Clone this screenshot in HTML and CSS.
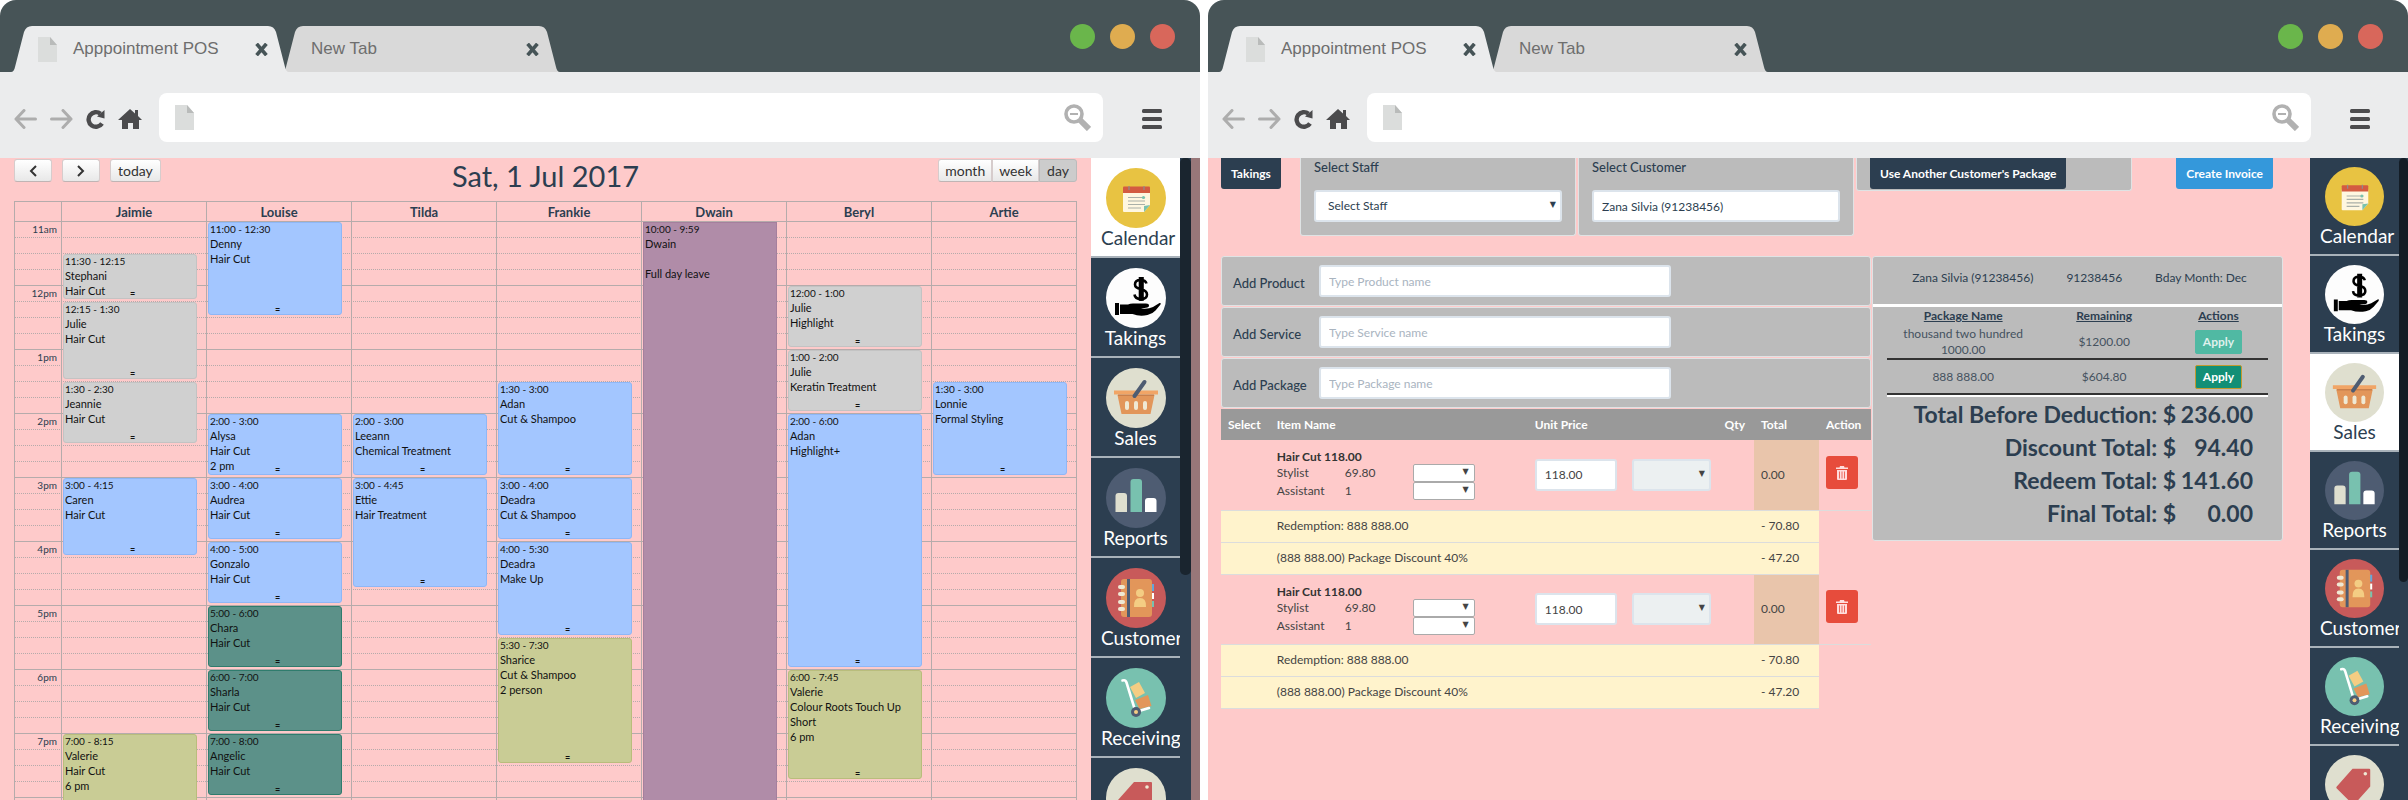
FILE: index.html
```html
<!DOCTYPE html>
<html lang="en">
<head>
<meta charset="utf-8">
<title>Apppointment POS</title>
<link rel="stylesheet" href="styles.css">
</head>
<body>
<svg class="defs" aria-hidden="true">
  <symbol id="tab" viewBox="0 0 278 46"><path d="M0 46Q3 46 4 41L13 6Q15 0 21 0H257Q263 0 265 6L274 41Q275 46 278 46Z"/></symbol>
  <symbol id="page" viewBox="0 0 19 25"><path fill="#dbdddc" d="M0 0h12l7 8v17H0z"/><path fill="#b9bbba" d="M12 0l7 8h-7z"/></symbol>
  <symbol id="close" viewBox="0 0 13 13"><path fill="none" stroke="#465457" stroke-width="3.6" d="M1.6.8l9.800 11.400M11.400.8l-9.800 11.400"/></symbol>
  <symbol id="back" viewBox="0 0 23 20"><path fill="none" stroke="#adadad" stroke-width="3" stroke-linecap="round" stroke-linejoin="round" d="M10 1.500L2 10l8 8.500M2 10h19.500"/></symbol>
  <symbol id="forward" viewBox="0 0 23 20"><path fill="none" stroke="#adadad" stroke-width="3" stroke-linecap="round" stroke-linejoin="round" d="M13 1.500l8 8.500-8 8.500M21 10H1.500"/></symbol>
  <symbol id="reload" viewBox="0 0 19 20"><path fill="none" stroke="#4b4b4d" stroke-width="4.400" d="M16 14.500A7.300 7.300 0 1 1 14.500 4.800"/><path fill="#4b4b4d" d="M18.500 1v8.500L11 7.500z"/></symbol>
  <symbol id="home" viewBox="0 0 24 20"><path fill="#4b4b4d" d="M12 0l5 4.500V1h3v6l4 4h-3v9h-6v-6h-5v6H4v-9H0z"/></symbol>
  <symbol id="search" viewBox="0 0 27 27"><circle cx="10" cy="10" r="8" fill="none" stroke="#b1b1b1" stroke-width="3.600"/><path stroke="#b1b1b1" stroke-width="2" d="M6 10h8"/><path stroke="#b1b1b1" stroke-width="6" d="M16 16l9 9"/></symbol>
  <symbol id="menu" viewBox="0 0 20 20"><g fill="#4b4b4d"><rect width="20" height="4" rx="1.500"/><rect y="8" width="20" height="4" rx="1.500"/><rect y="16" width="20" height="4" rx="1.500"/></g></symbol>
  <symbol id="left" viewBox="0 0 8 12"><path fill="none" stroke="#333" stroke-width="2" d="M7 1L2 6l5 5"/></symbol>
  <symbol id="right" viewBox="0 0 8 12"><path fill="none" stroke="#333" stroke-width="2" d="M1 1l5 5-5 5"/></symbol>
  <symbol id="trash" viewBox="0 0 12 14"><path fill="#fdd" d="M4 0h4l.5 1.500H12V3H0V1.500h3.500zM1 4h10v9q0 1-1 1H2q-1 0-1-1z"/><path stroke="#e74c3c" d="M3.500 5.500v7M6 5.500v7M8.500 5.500v7" stroke-width=".8"/></symbol>
  <symbol id="calendar" viewBox="0 0 60 60"><circle cx="30" cy="30" r="30" fill="#e8c342"/><path fill="#fff7e0" d="M17 23h27v14l-6 7H18q-1 0-1-1z"/><path fill="#d35b41" d="M18 18.500h25q1 0 1 1V25H17v-5.500q0-1 1-1z"/><path stroke="#8d8d8d" stroke-width="1.200" d="M23 18v4M38 18v4"/><path stroke="#aab0a8" stroke-width="1.200" d="M22 29.500h17M22 33h17M22 36.500h17M22 40h13"/><circle cx="37.500" cy="29.500" r="1.600" fill="#7ac2ae"/><path fill="#7ac2ae" d="M38 44v-6l6-1z"/></symbol>
  <symbol id="takings" viewBox="0 0 60 60"><circle cx="30" cy="30" r="30" fill="#fdfdfd"/><path fill="none" stroke="#000" stroke-width="2.600" d="M40.500 15.500q-1-3.500-6-3.500-5.500 0-5.500 4.500 0 3.500 6 4.700 6 1.300 6 5.300 0 4.500-6 4.500-6 0-6.500-4.500M34 9v24M36.500 9v24"/><path d="M9 35h4v12H9zM14 36.500h8q2-1 5-1h13q3 0 3 2t-3 2.300l-5 .7q7 1 12-1.500l6.500-4q2-.5 1 1.500l-5 6q-3 3.500-8 4.500-8 1.700-15-1H14z"/></symbol>
  <symbol id="sales" viewBox="0 0 60 60"><circle cx="30" cy="30" r="30" fill="#dfdfcf"/><path fill="#e2965a" d="M11.500 27h37l-4 19h-29z"/><path fill="#f1a566" d="M8 22.500h44v4H8z"/><path fill="#c9804c" d="M12 26.500h36v1.500H12z"/><g fill="#efe9d4"><rect x="19" y="33" width="4" height="9" rx="2"/><rect x="28" y="33" width="4" height="9" rx="2"/><rect x="37" y="33" width="4" height="9" rx="2"/></g><path stroke="#4e5c72" stroke-width="4" stroke-linecap="round" d="M28.500 28L38.500 14"/></symbol>
  <symbol id="reports" viewBox="0 0 60 60"><circle cx="30" cy="30" r="30" fill="#4e5c72"/><path fill="#dfdfcf" d="M9.500 44V28q0-3 3-3H18q3 0 3 3v16z"/><path fill="#78c1af" d="M24.500 44V14q0-3 3-3H33q3 0 3 3v30z"/><path fill="#fff" d="M39 44V33q0-3 3-3h5.500q3 0 3 3v11z"/></symbol>
  <symbol id="customer" viewBox="0 0 60 60"><circle cx="30" cy="30" r="30" fill="#c85a5a"/><path fill="#62a7dc" d="M44 16h4v7h-4z"/><path fill="#fff" d="M44 25h4v6h-4z"/><path fill="#78c1af" d="M44 33h4v6h-4z"/><rect x="15" y="11" width="31" height="38" rx="3" fill="#e2965a"/><path fill="#4e5c72" d="M21 11h3v38h-3z"/><g fill="#efe9d4"><rect x="12" y="17" width="7" height="4" rx="2"/><rect x="12" y="24" width="7" height="4" rx="2"/><rect x="12" y="32" width="7" height="4" rx="2"/><rect x="12" y="39" width="7" height="4" rx="2"/></g><circle cx="34" cy="25" r="4" fill="#f4cd83"/><path fill="#f4cd83" d="M28 39q-.5-9 6-9t6 9z"/></symbol>
  <symbol id="receiving" viewBox="0 0 60 60"><circle cx="30" cy="30" r="30" fill="#78c1af"/><path fill="#f4cd83" d="M24 19l9-5 6 11-9 5z"/><path fill="#e2965a" d="M29 32l13-5 3.500 11-12 3z"/><path fill="none" stroke="#fff" stroke-width="2.600" stroke-linecap="round" stroke-linejoin="round" d="M16.500 12.500q3-1 4 2L29 42M33 43l10-3"/><circle cx="30" cy="44" r="5" fill="#4e5c72"/><circle cx="30" cy="44" r="2" fill="#f4cd83"/></symbol>
  <symbol id="tag" viewBox="0 0 60 60"><circle cx="30" cy="30" r="30" fill="#dfdfcf"/><path fill="#c85a5a" d="M28 14h17q1 0 1 1v17L30 50q-1 1-2 0L12 34q-1-1 0-2z"/><circle cx="41" cy="19" r="1.800" fill="#efe9d4"/></symbol>
</svg>

<section class="browser">
  <header class="tabs">
    <div class="tab tab-active"><svg class="tab-shape"><use href="#tab"/></svg><svg class="page-icon"><use href="#page"/></svg><span class="tab-title">Apppointment POS</span><button class="icon-btn" aria-label="Close tab"><svg width="13" height="13"><use href="#close"/></svg></button></div>
    <div class="tab tab-new"><svg class="tab-shape"><use href="#tab"/></svg><span class="tab-title">New Tab</span><button class="icon-btn" aria-label="Close tab"><svg width="13" height="13"><use href="#close"/></svg></button></div>
    <div class="lights"><i class="light green"></i><i class="light amber"></i><i class="light red"></i></div>
  </header>
  <nav class="toolbar">
    <div class="nav-buttons">
      <button class="icon-btn" aria-label="Back"><svg width="23" height="20"><use href="#back"/></svg></button>
      <button class="icon-btn" aria-label="Forward"><svg width="23" height="20"><use href="#forward"/></svg></button>
      <button class="icon-btn" aria-label="Reload"><svg width="19" height="20"><use href="#reload"/></svg></button>
      <button class="icon-btn" aria-label="Home"><svg width="24" height="20"><use href="#home"/></svg></button>
    </div>
    <div class="address"><svg class="page-icon"><use href="#page"/></svg><input type="text" aria-label="Address"><button class="icon-btn" aria-label="Search"><svg width="27" height="27"><use href="#search"/></svg></button></div>
    <button class="icon-btn" aria-label="Menu"><svg width="20" height="20"><use href="#menu"/></svg></button>
  </nav>
  <div class="view">
    <main class="schedule">
      <div class="cal-head">
        <div class="cal-nav"><button class="cal-btn" aria-label="Previous"><svg width="8" height="12"><use href="#left"/></svg></button><button class="cal-btn" aria-label="Next"><svg width="8" height="12"><use href="#right"/></svg></button><button class="cal-btn today">today</button></div>
        <h1>Sat, 1 Jul 2017</h1>
        <div class="cal-views"><button class="cal-btn">month</button><button class="cal-btn">week</button><button class="cal-btn selected">day</button></div>
      </div>
      <div class="staff-row"><span></span><b>Jaimie</b><b>Louise</b><b>Tilda</b><b>Frankie</b><b>Dwain</b><b>Beryl</b><b>Artie</b></div>
      <div class="cal-body">
        <div class="hours"><span>11am</span><span>12pm</span><span>1pm</span><span>2pm</span><span>3pm</span><span>4pm</span><span>5pm</span><span>6pm</span><span>7pm</span></div>
        <div class="day">
          <article class="event grey" style="grid-row:3/span 3"><time>11:30 - 12:15</time><p>Stephani</p><p>Hair Cut</p></article>
          <article class="event grey" style="grid-row:6/span 5"><time>12:15 - 1:30</time><p>Julie</p><p>Hair Cut</p></article>
          <article class="event grey" style="grid-row:11/span 4"><time>1:30 - 2:30</time><p>Jeannie</p><p>Hair Cut</p></article>
          <article class="event blue" style="grid-row:17/span 5"><time>3:00 - 4:15</time><p>Caren</p><p>Hair Cut</p></article>
          <article class="event olive" style="grid-row:33/span 5"><time>7:00 - 8:15</time><p>Valerie</p><p>Hair Cut</p><p>6 pm</p></article>
        </div>
        <div class="day">
          <article class="event blue" style="grid-row:1/span 6"><time>11:00 - 12:30</time><p>Denny</p><p>Hair Cut</p></article>
          <article class="event blue" style="grid-row:13/span 4"><time>2:00 - 3:00</time><p>Alysa</p><p>Hair Cut</p><p>2 pm</p></article>
          <article class="event blue" style="grid-row:17/span 4"><time>3:00 - 4:00</time><p>Audrea</p><p>Hair Cut</p></article>
          <article class="event blue" style="grid-row:21/span 4"><time>4:00 - 5:00</time><p>Gonzalo</p><p>Hair Cut</p></article>
          <article class="event teal" style="grid-row:25/span 4"><time>5:00 - 6:00</time><p>Chara</p><p>Hair Cut</p></article>
          <article class="event teal" style="grid-row:29/span 4"><time>6:00 - 7:00</time><p>Sharla</p><p>Hair Cut</p></article>
          <article class="event teal" style="grid-row:33/span 4"><time>7:00 - 8:00</time><p>Angelic</p><p>Hair Cut</p></article>
        </div>
        <div class="day">
          <article class="event blue" style="grid-row:13/span 4"><time>2:00 - 3:00</time><p>Leeann</p><p>Chemical Treatment</p></article>
          <article class="event blue" style="grid-row:17/span 7"><time>3:00 - 4:45</time><p>Ettie</p><p>Hair Treatment</p></article>
        </div>
        <div class="day">
          <article class="event blue" style="grid-row:11/span 6"><time>1:30 - 3:00</time><p>Adan</p><p>Cut &amp; Shampoo</p></article>
          <article class="event blue" style="grid-row:17/span 4"><time>3:00 - 4:00</time><p>Deadra</p><p>Cut &amp; Shampoo</p></article>
          <article class="event blue" style="grid-row:21/span 6"><time>4:00 - 5:30</time><p>Deadra</p><p>Make Up</p></article>
          <article class="event olive" style="grid-row:27/span 8"><time>5:30 - 7:30</time><p>Sharice</p><p>Cut &amp; Shampoo</p><p>2 person</p></article>
        </div>
        <div class="day">
          <article class="event leave" style="grid-row:1/span 44"><time>10:00 - 9:59</time><p>Dwain</p><p>&nbsp;</p><p>Full day leave</p></article>
        </div>
        <div class="day">
          <article class="event grey" style="grid-row:5/span 4"><time>12:00 - 1:00</time><p>Julie</p><p>Highlight</p></article>
          <article class="event grey" style="grid-row:9/span 4"><time>1:00 - 2:00</time><p>Julie</p><p>Keratin Treatment</p></article>
          <article class="event blue" style="grid-row:13/span 16"><time>2:00 - 6:00</time><p>Adan</p><p>Highlight+</p></article>
          <article class="event olive" style="grid-row:29/span 7"><time>6:00 - 7:45</time><p>Valerie</p><p>Colour Roots Touch Up Short</p><p>6 pm</p></article>
        </div>
        <div class="day">
          <article class="event blue" style="grid-row:11/span 6"><time>1:30 - 3:00</time><p>Lonnie</p><p>Formal Styling</p></article>
        </div>
      </div>
    </main>
    <aside class="side">
      <a class="side-item current" href="#calendar"><svg><use href="#calendar"/></svg>Calendar</a>
      <a class="side-item" href="#takings"><svg><use href="#takings"/></svg>Takings</a>
      <a class="side-item" href="#sales"><svg><use href="#sales"/></svg>Sales</a>
      <a class="side-item" href="#reports"><svg><use href="#reports"/></svg>Reports</a>
      <a class="side-item" href="#customer"><svg><use href="#customer"/></svg>Customers</a>
      <a class="side-item" href="#receiving"><svg><use href="#receiving"/></svg>Receivings</a>
      <a class="side-item" href="#tag" aria-label="Tags"><svg><use href="#tag"/></svg></a>
    </aside>
    <div class="scroll"><div class="thumb"></div></div>
    <div class="edge"></div>
  </div>
</section>

<section class="browser">
  <header class="tabs">
    <div class="tab tab-active"><svg class="tab-shape"><use href="#tab"/></svg><svg class="page-icon"><use href="#page"/></svg><span class="tab-title">Apppointment POS</span><button class="icon-btn" aria-label="Close tab"><svg width="13" height="13"><use href="#close"/></svg></button></div>
    <div class="tab tab-new"><svg class="tab-shape"><use href="#tab"/></svg><span class="tab-title">New Tab</span><button class="icon-btn" aria-label="Close tab"><svg width="13" height="13"><use href="#close"/></svg></button></div>
    <div class="lights"><i class="light green"></i><i class="light amber"></i><i class="light red"></i></div>
  </header>
  <nav class="toolbar">
    <div class="nav-buttons">
      <button class="icon-btn" aria-label="Back"><svg width="23" height="20"><use href="#back"/></svg></button>
      <button class="icon-btn" aria-label="Forward"><svg width="23" height="20"><use href="#forward"/></svg></button>
      <button class="icon-btn" aria-label="Reload"><svg width="19" height="20"><use href="#reload"/></svg></button>
      <button class="icon-btn" aria-label="Home"><svg width="24" height="20"><use href="#home"/></svg></button>
    </div>
    <div class="address"><svg class="page-icon"><use href="#page"/></svg><input type="text" aria-label="Address"><button class="icon-btn" aria-label="Search"><svg width="27" height="27"><use href="#search"/></svg></button></div>
    <button class="icon-btn" aria-label="Menu"><svg width="20" height="20"><use href="#menu"/></svg></button>
  </nav>
  <div class="view">
    <main class="sale">
      <div class="sale-top">
        <div><button class="btn navy">Takings</button></div>
        <div class="panel pick"><label for="staff">Select Staff</label><span class="drop"><select id="staff" class="field"><option>Select Staff</option></select></span></div>
        <div class="panel pick"><label for="cust">Select Customer</label><input id="cust" class="field" type="text" value="Zana Silvia (91238456)"></div>
        <div class="panel other"><button class="btn navy">Use Another Customer's Package</button></div>
        <div class="invoice"><button class="btn sky">Create Invoice</button></div>
      </div>
      <div class="sale-main">
        <div>
          <div class="panel add"><label for="prod">Add Product</label><input id="prod" class="field" type="text" placeholder="Type Product name"></div>
          <div class="panel add"><label for="serv">Add Service</label><input id="serv" class="field" type="text" placeholder="Type Service name"></div>
          <div class="panel add"><label for="pack">Add Package</label><input id="pack" class="field" type="text" placeholder="Type Package name"></div>
          <table class="items">
            <colgroup><col class="c-select"><col class="c-item"><col class="c-price"><col class="c-qty"><col class="c-total"><col class="c-action"></colgroup>
            <thead><tr><th>Select</th><th>Item Name</th><th>Unit Price</th><th>Qty</th><th>Total</th><th>Action</th></tr></thead>
            <tbody>
              <tr class="item"><td></td><td><strong>Hair Cut 118.00</strong><div class="roles"><span>Stylist</span><span>69.80</span><span class="drop"><select aria-label="Stylist"><option></option></select></span><span>Assistant</span><span>1</span><span class="drop"><select aria-label="Assistant"><option></option></select></span></div></td><td><div class="price"><input class="field" type="text" aria-label="Unit price" value="118.00"><span class="drop"><select class="field muted" aria-label="Price option"><option></option></select></span></div></td><td></td><td class="total">0.00</td><td><button class="delete" aria-label="Delete"><svg width="12" height="14"><use href="#trash"/></svg></button></td></tr>
              <tr class="note"><td></td><td colspan="3">Redemption: 888 888.00</td><td>- 70.80</td><td class="blank"></td></tr>
              <tr class="note"><td></td><td colspan="3">(888 888.00) Package Discount 40%</td><td>- 47.20</td><td class="blank"></td></tr>
              <tr class="item"><td></td><td><strong>Hair Cut 118.00</strong><div class="roles"><span>Stylist</span><span>69.80</span><span class="drop"><select aria-label="Stylist"><option></option></select></span><span>Assistant</span><span>1</span><span class="drop"><select aria-label="Assistant"><option></option></select></span></div></td><td><div class="price"><input class="field" type="text" aria-label="Unit price" value="118.00"><span class="drop"><select class="field muted" aria-label="Price option"><option></option></select></span></div></td><td></td><td class="total">0.00</td><td><button class="delete" aria-label="Delete"><svg width="12" height="14"><use href="#trash"/></svg></button></td></tr>
              <tr class="note"><td></td><td colspan="3">Redemption: 888 888.00</td><td>- 70.80</td><td class="blank"></td></tr>
              <tr class="note"><td></td><td colspan="3">(888 888.00) Package Discount 40%</td><td>- 47.20</td><td class="blank"></td></tr>
            </tbody>
          </table>
        </div>
        <div class="panel summary">
          <div class="who"><span>Zana Silvia (91238456)</span><span>91238456</span><span>Bday Month: Dec</span></div>
          <div class="packages">
            <table>
              <colgroup><col class="p-name"><col class="p-left"><col class="p-act"></colgroup>
              <thead><tr><th>Package Name</th><th>Remaining</th><th>Actions</th></tr></thead>
              <tbody>
                <tr><td>thousand two hundred<br>1000.00</td><td>$1200.00</td><td><button class="apply faded">Apply</button></td></tr>
                <tr><td>888 888.00</td><td>$604.80</td><td><button class="apply">Apply</button></td></tr>
              </tbody>
            </table>
          </div>
          <dl class="totals">
            <dt>Total Before Deduction: $</dt><dd>236.00</dd>
            <dt>Discount Total: $</dt><dd>94.40</dd>
            <dt>Redeem Total: $</dt><dd>141.60</dd>
            <dt>Final Total: $</dt><dd>0.00</dd>
          </dl>
        </div>
      </div>
    </main>
    <aside class="side side-compact">
      <a class="side-item" href="#calendar"><svg><use href="#calendar"/></svg>Calendar</a>
      <a class="side-item" href="#takings"><svg><use href="#takings"/></svg>Takings</a>
      <a class="side-item current" href="#sales"><svg><use href="#sales"/></svg>Sales</a>
      <a class="side-item" href="#reports"><svg><use href="#reports"/></svg>Reports</a>
      <a class="side-item" href="#customer"><svg><use href="#customer"/></svg>Customers</a>
      <a class="side-item" href="#receiving"><svg><use href="#receiving"/></svg>Receivings</a>
      <a class="side-item" href="#tag" aria-label="Tags"><svg><use href="#tag"/></svg></a>
    </aside>
    <div class="scroll scroll-narrow"><div class="thumb"></div></div>
  </div>
</section>
</body>
</html>
```
FILE: styles.css
```css
* { box-sizing: border-box; }
body {
  margin: 0;
  height: 100vh;
  display: flex;
  gap: 8px;
  overflow: hidden;
  background: #fff;
  font: 12px/16px Lato, "Liberation Sans", sans-serif;
  color: #2c3e50;
}
button, input, select { font: inherit; color: inherit; margin: 0; }
svg { display: block; }
.defs { position: absolute; width: 0; height: 0; }

/* Browser frame */
.browser { flex: 1; min-width: 0; display: flex; flex-direction: column; }
.tabs {
  height: 72px;
  padding: 0 25px 0 11px;
  display: flex;
  align-items: flex-end;
  background: #475457;
  border-radius: 16px 16px 0 0;
  font: 17px/20px "Liberation Sans", Arial, sans-serif;
  color: #6e6e6e;
}
.tab {
  position: relative;
  width: 278px;
  height: 46px;
  padding: 0 21px 0 27px;
  display: flex;
  align-items: center;
}
.tab > * { position: relative; }
.tab > .tab-shape { position: absolute; inset: 0; width: 100%; height: 100%; fill: #d9d9d9; }
.tab-active { z-index: 1; }
.tab-active > .tab-shape { fill: #ebeced; }
.tab-new { margin-left: -7px; padding-left: 29px; }
.tab-title { flex: 1; white-space: nowrap; }
.page-icon { width: 19px; height: 25px; flex: none; }
.tab .page-icon { margin-right: 16px; }
.icon-btn { border: 0; padding: 0; background: none; }
.lights { margin-left: auto; align-self: center; display: flex; gap: 15px; }
.light { width: 25px; height: 25px; border-radius: 50%; }
.green { background: #6ab64b; }
.amber { background: #dfac50; }
.red { background: #d8675b; }
.toolbar {
  height: 86px;
  padding: 5px 38px 0 14px;
  display: flex;
  align-items: center;
  background: #ebeced;
}
.nav-buttons { display: flex; gap: 13px; width: 145px; padding-top: 2px; }
.toolbar > .icon-btn { margin-left: 39px; padding-top: 2px; }
.address {
  flex: 1;
  height: 49px;
  padding: 0 12px 0 16px;
  display: flex;
  align-items: center;
  background: #fff;
  border-radius: 8px;
}
.address input { flex: 1; min-width: 0; border: 0; background: none; height: 32px; }
.view { flex: 1; min-height: 0; display: flex; overflow: hidden; background: #fecaca; }

/* Calendar */
.schedule { flex: 1; min-width: 0; padding: 0 14px; display: flex; flex-direction: column; }
.cal-head { height: 43px; display: grid; grid-template-columns: 1fr auto 1fr; align-items: start; }
.cal-nav { display: flex; gap: 10px; padding-top: 1px; }
.cal-btn {
  height: 23px;
  min-width: 38px;
  padding: 0 7px;
  display: flex;
  align-items: center;
  justify-content: center;
  border: 1px solid #d6cccc;
  border-bottom-color: #c0b4b4;
  border-radius: 3px;
  background: linear-gradient(#fff, #e8e8e8);
  font-size: 14px;
  line-height: 20px;
  color: #333;
}
.cal-views { display: flex; justify-content: flex-end; padding-top: 1px; }
.cal-views .cal-btn { border-radius: 0; padding: 0 6px; }
.cal-views .cal-btn:first-child { border-radius: 3px 0 0 3px; }
.cal-views .selected { border-radius: 0 3px 3px 0; background: #ccc; border-color: #bbb; }
h1 { margin: 0; font-size: 29px; line-height: 35px; font-weight: 400; }
.staff-row {
  flex: none;
  display: grid;
  grid-template-columns: 47px repeat(7, 1fr);
  height: 21px;
  border: 1px solid #b5abab;
  border-width: 1px 1px 1px 0;
  text-align: center;
  font-size: 13px;
  line-height: 20px;
}
.staff-row > * { border-left: 1px solid #b5abab; }
.cal-body {
  flex: 1;
  min-height: 0;
  display: grid;
  grid-template-columns: 47px repeat(7, 1fr);
  overflow: hidden;
  border-right: 1px solid #b5abab;
  background:
    linear-gradient(transparent 63px, #b5abab 63px) 0 0 / 100% 64px,
    repeating-linear-gradient(90deg, #fecaca 0 1px, transparent 1px 2px),
    linear-gradient(transparent 15px, #b5abab 15px) 0 0 / 100% 16px;
}
.hours { border-left: 1px solid #b5abab; font-size: 10px; line-height: 15px; text-align: right; }
.hours span { display: block; height: 64px; padding-right: 4px; }
.day {
  display: grid;
  grid-template-rows: repeat(44, 16px);
  border-left: 1px solid #b5abab;
  padding: 0 9px 0 1px;
}
.event {
  position: relative;
  margin-bottom: 3px;
  padding: 0 1px;
  border: 1px solid;
  border-radius: 3px;
  overflow: hidden;
  font-size: 11px;
  line-height: 15px;
  color: #111;
}
.event time { display: block; font-size: 10px; line-height: 13px; }
.event p { margin: 0; }
.event::after {
  content: "=";
  position: absolute;
  bottom: 0;
  left: 50%;
  font-size: 9px;
  line-height: 8px;
  font-weight: 700;
}
.event.leave::after { content: none; }
.grey { background: #d0d0d0; border-color: #c3c3c3; }
.blue { background: #a3c6ff; border-color: #8eb7f7; }
.teal { background: #5c9189; border-color: #2f7c6d; }
.olive { background: #c9cc95; border-color: #b9bd7c; }
.leave { background: #b08ca8; border-color: #a57f9d; border-radius: 0; }

/* Side menu */
.side { width: 89px; flex: none; overflow: hidden; background: #2c3e50; }
.side-item {
  display: block;
  height: 100px;
  padding: 10px 10px 0;
  border-bottom: 2px solid #a9b2ba;
  color: #fff;
  font-size: 19px;
  line-height: 20px;
  text-align: center;
  text-decoration: none;
  white-space: nowrap;
}
.side-item svg { width: 60px; height: 60px; margin: 0 auto; }
.side-item.current { background: #fff; color: #2c3e50; }
.side-compact .side-item { height: 98px; padding-top: 9px; }
.side-compact .side-item svg { width: 59px; height: 59px; }
.scroll { width: 11px; flex: none; background: #2c3e50; }
.thumb { height: 65%; border-radius: 5px; background: #1a252f; }
.scroll-narrow { width: 9px; }
.scroll-narrow .thumb { height: 66%; background: #141d26; }
.edge { width: 9px; flex: none; background: #987779; }

/* Sale */
.sale { flex: 1; min-width: 0; padding-left: 13px; }
.sale-top {
  display: grid;
  grid-template-columns: 77px 1fr 1fr 1fr 176px;
  gap: 2px;
  align-items: start;
  height: 98px;
}
.panel { background: #bbb; border: 1px solid #dfe3e4; border-radius: 3px; }
.sale-top .panel { border-top: 0; border-radius: 0 0 3px 3px; }
.pick { height: 78px; padding: 0 13px; }
.pick label { display: block; font-size: 13px; line-height: 18px; margin-bottom: 14px; font-weight: 500; }
.pick select.field { padding-left: 12px; }
.other { height: 33px; padding-left: 13px; }
.invoice { text-align: right; padding-right: 37px; }
.btn {
  height: 31px;
  padding: 0 10px;
  border: 0;
  border-radius: 0 0 3px 3px;
  color: #fff;
  font-weight: 700;
  white-space: nowrap;
}
.navy { background: #2c3e50; }
.sky { background: #3498db; }
.field {
  width: 100%;
  height: 32px;
  padding: 0 8px;
  border: 2px solid #dce4ec;
  border-radius: 3px;
  background: #fff;
}
.field::placeholder { color: #a9b4bf; opacity: 1; }
select { appearance: none; }
.drop { display: block; position: relative; }
.drop::after { content: "▼"; position: absolute; right: 6px; top: 50%; margin-top: -8px; font-size: 8px; line-height: 14px; font-family: "DejaVu Sans", sans-serif; pointer-events: none; }
.sale-main {
  display: grid;
  grid-template-columns: 650fr 411fr;
  gap: 1px;
  padding-right: 27px;
  align-items: start;
}
.add { display: flex; align-items: center; height: 50px; margin-bottom: 1px; padding-left: 11px; }
.add label { width: 86px; font-size: 13px; font-weight: 500; padding-top: 4px; }
.add .field { width: 352px; }
table { width: 100%; border-collapse: collapse; table-layout: fixed; }
.items { color: #444; }
.items th { height: 31px; padding: 0 7px; background: #999; color: #fff; text-align: left; }
.items td { padding: 0 7px; border-bottom: 1px solid #dcdcdc; }
.c-select { width: 7.5%; }
.c-item { width: 39.7%; }
.c-price { width: 29.2%; }
.c-qty { width: 5.6%; }
.c-total { width: 10%; }
.c-action { width: 8%; }
.item td { height: 70px; }
.items strong { display: block; font-weight: 700; color: #333; line-height: 15px; }
.roles { display: grid; grid-template-columns: 68px 68px 62px; align-items: center; line-height: 18px; }
.roles select { display: block; width: 62px; height: 18px; border: 1px solid #aaa; border-radius: 2px; background: #fff; }
.price { display: flex; gap: 15px; }
.price .field { width: 82px; }
.price select.field { width: 79px; }
.field.muted { background: #ecf0f1; }
.items .total { background: #e9c5ab; }
.delete { width: 32px; height: 33px; padding: 0; border: 0; border-radius: 3px; background: #e74c3c; }
.delete svg { margin: 0 auto; }
.note td { height: 32px; background: #fff3cc; }
.note .blank { background: none; border: 0; }
.who {
  display: flex;
  gap: 33px;
  justify-content: center;
  height: 47px;
  padding: 13px 0 0 4px;
}
.packages { border-top: 3px solid #fff; padding: 0 14px; }
.packages th { height: 18px; padding: 0; font-weight: 700; text-decoration: underline; }
.packages td { height: 35px; padding: 0; text-align: center; color: #45525f; line-height: 16px; border-bottom: 2px solid #333; }
.p-name { width: 40%; }
.p-left { width: 34%; }
.p-act { width: 26%; }
.packages table { border-bottom: 2px solid #fff; border-collapse: separate; border-spacing: 0; }
.apply { height: 24px; padding: 0 7px; border: 1px solid #c29a2e; border-radius: 2px; background: #128f76; color: #fff; font-weight: 700; }
.apply.faded { background: #50b9a3; border-color: #50b9a3; color: #dff0ec; }
.totals {
  margin: 0;
  padding: 1px 29px 10px 0;
  display: grid;
  grid-template-columns: 1fr 77px;
  font-size: 23px;
  line-height: 33px;
  font-weight: 700;
  text-align: right;
}
.totals dd { margin: 0; }
```
